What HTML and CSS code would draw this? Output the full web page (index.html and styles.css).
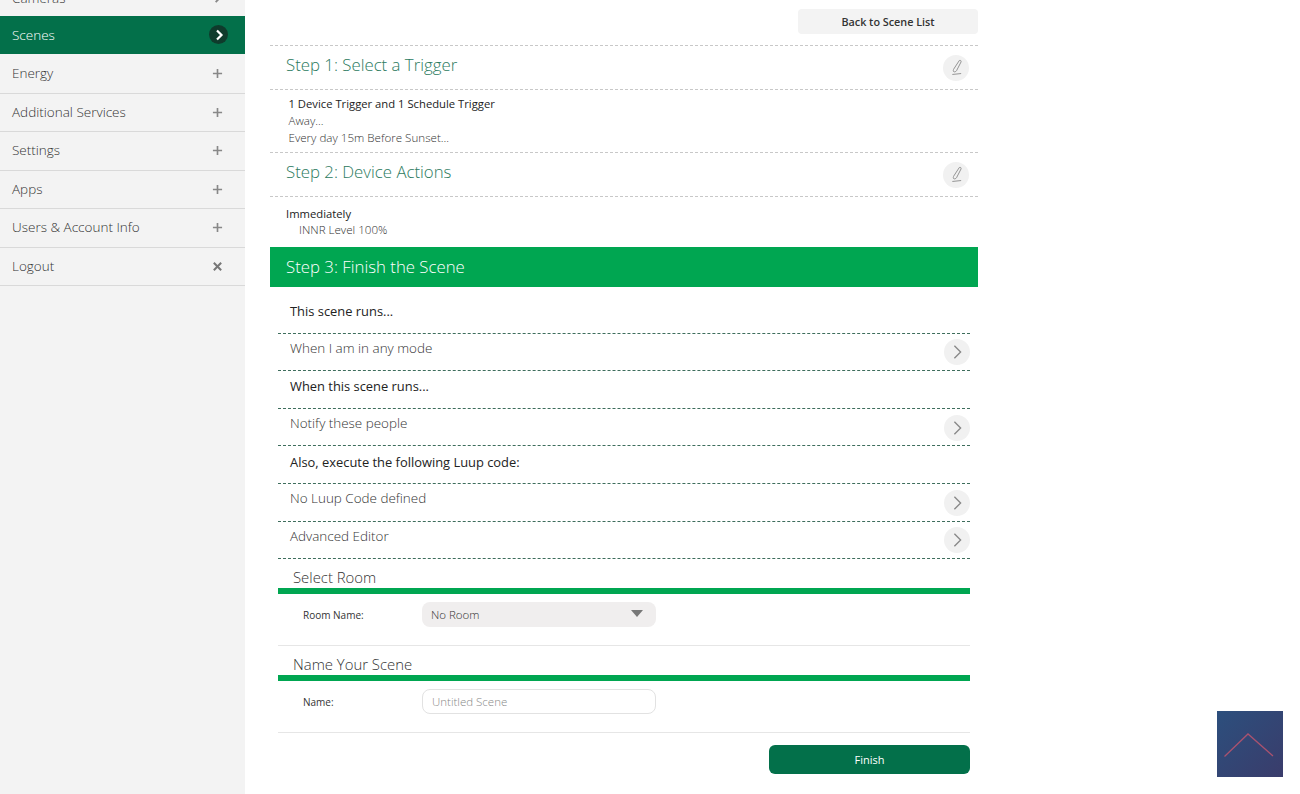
FILE: index.html
```html
<!DOCTYPE html>
<html lang="en">
<head>
<meta charset="utf-8">
<title>Scene</title>
<link rel="stylesheet" href="styles.css">
</head>
<body>
<div class="page">
  <nav class="sidebar">
    <ul class="menu">
      <li class="menu-item cut"><span>Cameras</span><svg class="mi" viewBox="0 0 12 12"><path d="M4 1l5 5-5 5" fill="none" stroke="#888" stroke-width="2"/></svg></li>
      <li class="menu-item active"><span>Scenes</span><span class="active-badge"><svg viewBox="0 0 12 12"><path d="M4 1.5L8.5 6 4 10.5" fill="none" stroke="#fff" stroke-width="2.2"/></svg></span></li>
      <li class="menu-item"><span>Energy</span><svg class="mi" viewBox="0 0 12 12"><path d="M6 1v10M1 6h10" stroke="#888" stroke-width="1.8"/></svg></li>
      <li class="menu-item"><span>Additional Services</span><svg class="mi" viewBox="0 0 12 12"><path d="M6 1v10M1 6h10" stroke="#888" stroke-width="1.8"/></svg></li>
      <li class="menu-item"><span>Settings</span><svg class="mi" viewBox="0 0 12 12"><path d="M6 1v10M1 6h10" stroke="#888" stroke-width="1.8"/></svg></li>
      <li class="menu-item"><span>Apps</span><svg class="mi" viewBox="0 0 12 12"><path d="M6 1v10M1 6h10" stroke="#888" stroke-width="1.8"/></svg></li>
      <li class="menu-item"><span>Users &amp; Account Info</span><svg class="mi" viewBox="0 0 12 12"><path d="M6 1v10M1 6h10" stroke="#888" stroke-width="1.8"/></svg></li>
      <li class="menu-item"><span>Logout</span><svg class="mi" viewBox="0 0 12 12"><path d="M2 2l8 8M10 2l-8 8" stroke="#777" stroke-width="2.2"/></svg></li>
    </ul>
  </nav>

  <main class="content">
    <div class="topbar"><button class="back-btn">Back to Scene List</button></div>

    <section class="step-head">
      <h2>Step 1: Select a Trigger</h2>
      <span class="round-btn"><svg viewBox="0 0 14 18"><path d="M10 1.5c1-.8 2.4.2 1.9 1.5L7 12.5c-.8 1.3-2.6 1.6-3.2.8-.5-.7-.2-1.8.2-2.6zM2.5 16.5l9.5-1" fill="none" stroke="#8c8c8c" stroke-width="1"/></svg></span>
    </section>
    <section class="summary s1">
      <p class="strong">1 Device Trigger and 1 Schedule Trigger</p>
      <p>Away...</p>
      <p>Every day 15m Before Sunset...</p>
    </section>

    <section class="step-head">
      <h2>Step 2: Device Actions</h2>
      <span class="round-btn"><svg viewBox="0 0 14 18"><path d="M10 1.5c1-.8 2.4.2 1.9 1.5L7 12.5c-.8 1.3-2.6 1.6-3.2.8-.5-.7-.2-1.8.2-2.6zM2.5 16.5l9.5-1" fill="none" stroke="#8c8c8c" stroke-width="1"/></svg></span>
    </section>
    <section class="summary s2">
      <p class="strong">Immediately</p>
      <p class="indent">INNR Level 100%</p>
    </section>

    <h2 class="step-active">Step 3: Finish the Scene</h2>

    <div class="finish">
      <div class="row label-row">This scene runs...</div>
      <div class="row link-row"><span>When I am in any mode</span><span class="round-btn"><svg viewBox="0 0 12 18"><path d="M2.5 2l7 7-7 7" fill="none" stroke="#888" stroke-width="1.5"/></svg></span></div>
      <div class="row label-row">When this scene runs...</div>
      <div class="row link-row"><span>Notify these people</span><span class="round-btn"><svg viewBox="0 0 12 18"><path d="M2.5 2l7 7-7 7" fill="none" stroke="#888" stroke-width="1.5"/></svg></span></div>
      <div class="row label-row">Also, execute the following Luup code:</div>
      <div class="row link-row"><span>No Luup Code defined</span><span class="round-btn"><svg viewBox="0 0 12 18"><path d="M2.5 2l7 7-7 7" fill="none" stroke="#888" stroke-width="1.5"/></svg></span></div>
      <div class="row link-row"><span>Advanced Editor</span><span class="round-btn"><svg viewBox="0 0 12 18"><path d="M2.5 2l7 7-7 7" fill="none" stroke="#888" stroke-width="1.5"/></svg></span></div>

      <div class="form-block">
        <h3>Select Room</h3>
        <div class="field">
          <label>Room Name:</label>
          <div class="select"><span>No Room</span><i class="caret"></i></div>
        </div>
      </div>

      <div class="form-block">
        <h3>Name Your Scene</h3>
        <div class="field">
          <label>Name:</label>
          <div class="input">Untitled Scene</div>
        </div>
      </div>

      <div class="actions"><button class="finish-btn">Finish</button></div>
    </div>
  </main>

  <div class="to-top"><svg viewBox="0 0 66 66"><path d="M7.5 45.5L31 23 56 45" fill="none" stroke="#a9526f" stroke-width="1.3"/></svg></div>
</div>
</body>
</html>
```

FILE: styles.css
```css
* { box-sizing: border-box; }
html, body { margin: 0; padding: 0; height: 794px; overflow: hidden; background: #fff; }
body { font-family: "Open Sans", "Liberation Sans", sans-serif; color: #333; }
p, h2, h3, ul { margin: 0; padding: 0; }

.page { position: relative; display: flex; width: 1300px; height: 794px; overflow: hidden; }

.sidebar { flex: 0 0 245px; background: #f3f3f3; height: 794px; overflow: hidden; }
.menu { list-style: none; margin-top: -22px; }
.menu-item {
  display: flex; align-items: center; justify-content: space-between;
  height: 38.5px; padding: 0 22px 0 12px;
  font-size: 13.5px; font-weight: 300; color: #333;
  border-bottom: 1px solid #d9d9d9;
}
.menu-item span:first-child { margin-top: -1px; }
.menu-item.cut { border-bottom: 0; }
.menu-item.cut span:first-child { margin-top: 1px; }
.mi { width: 11px; height: 11px; }
.menu-item.active {
  background: #03704a; color: #fff; border-bottom: 0; padding-right: 17px;
  margin-top: -1px; margin-bottom: 1px;
}
.menu-item.active span:first-child { margin-top: 0; }
.active-badge { width: 19px; height: 19px; border-radius: 50%; background: #0f3b2c; display: flex; align-items: center; justify-content: center; }
.active-badge svg { width: 12px; height: 12px; }

.content { width: 708px; margin-left: 25px; flex: none; }
.topbar { height: 45px; padding-top: 9px; display: flex; justify-content: flex-end; }
.back-btn {
  width: 180px; height: 25px; border: 0; border-radius: 4px; background: #f3f3f3;
  font: 600 10.8px "Open Sans", sans-serif; color: #333; padding: 0 0 1px;
}

.step-head {
  height: 45px; display: flex; align-items: center; justify-content: space-between;
  padding: 0 9px 0 16px;
  border-top: 1px dashed #c8c8c8; border-bottom: 1px dashed #c8c8c8;
}
.step-head h2 { font-size: 16.8px; font-weight: 300; color: #2b7a5e; line-height: 24px; margin-top: -5px; }
.round-btn {
  width: 26px; height: 26px; border-radius: 50%; background: #f1f1f1; flex: none;
  display: flex; align-items: center; justify-content: center;
}
.round-btn svg { width: 13px; height: 17px; }

.summary { font-size: 11.6px; font-weight: 300; line-height: 17px; color: #333; }
.summary .strong { font-size: 11.25px; font-weight: 400; color: #222; }
.s1 { height: 62px; padding: 5px 0 0 18.5px; }
.s2 { height: 50px; padding: 9px 0 0 16px; line-height: 16px; }
.s2 .indent { padding-left: 13px; }

.step-active {
  height: 40px; background: #00a651; color: #fff; font-size: 16.8px; font-weight: 300;
  line-height: 40px; padding-left: 16px;
}

.finish { padding: 9px 8.5px 0 7.5px; }
.row {
  height: 37.6px; display: flex; align-items: center; justify-content: space-between;
  padding-left: 12.5px; font-size: 12.9px; border-bottom: 1px dashed #3e6d5c;
}
.label-row { font-weight: 400; color: #222; padding-bottom: 6px; }
.link-row { font-weight: 300; font-size: 13.45px; color: #333; padding-bottom: 8px; }
.link-row .round-btn { margin-top: 9px; }
.link-row .round-btn svg { width: 11px; height: 16px; margin-left: 2px; }

.form-block { height: 87px; border-bottom: 1px solid #e6e6e6; }
.form-block h3 {
  font-size: 14.9px; font-weight: 300; color: #333; line-height: 18px;
  padding: 8.5px 0 0 15.5px; border-bottom: 6px solid #00a651; box-sizing: content-box; height: 20px;
}
.field { display: flex; align-items: center; padding: 8.5px 0 0 25.5px; }
.field label { width: 119px; font-size: 10px; font-weight: 400; color: #333; padding-top: 1px; }
.select {
  width: 234px; height: 24.5px; border-radius: 8px; background: #f0eeee;
  display: flex; align-items: center; justify-content: space-between;
  padding: 0 13px 0 9px; font-size: 11.5px; font-weight: 300; color: #333;
}
.caret { width: 0; height: 0; border-left: 6px solid transparent; border-right: 6px solid transparent; border-top: 7px solid #777; margin-top: -1px; }
.input {
  width: 234px; height: 24.5px; border-radius: 8px; border: 1px solid #e2e2e2; background: #fff;
  display: flex; align-items: center; padding-left: 9px;
  font-size: 11.5px; font-weight: 300; color: #888;
}

.actions { display: flex; justify-content: flex-end; padding-top: 12px; }
.finish-btn {
  width: 201px; height: 29px; border: 0; border-radius: 6px; background: #03704a; color: #fff;
  font: 400 11px "Open Sans", sans-serif; padding: 0 0 0 1px;
}

.to-top {
  position: absolute; left: 1217px; top: 711px; width: 66px; height: 66px;
  background: linear-gradient(135deg, #2c4f7d, #3a3c6b);
}
.to-top svg { display: block; width: 66px; height: 66px; }
```
